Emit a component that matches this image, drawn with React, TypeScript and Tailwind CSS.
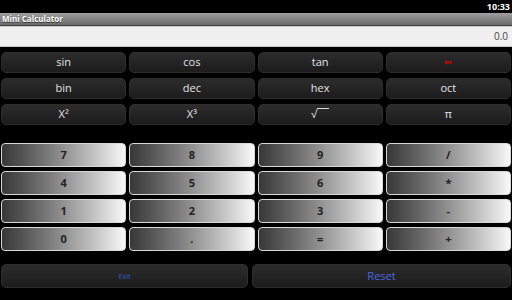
const sciRows: string[][] = [
	["sin", "cos", "tan", "back"],
	["bin", "dec", "hex", "oct"],
	["X²", "X³", "sqrt", "π"],
];

const numRows: string[][] = [
	["7", "8", "9", "/"],
	["4", "5", "6", "*"],
	["1", "2", "3", "-"],
	["0", ".", "=", "+"],
];

function SciLabel({ label }: { label: string }) {
	if (label === "back") {
		return (
			<svg width="8" height="5" viewBox="0 0 8 5">
				<path d="M0 2.5 L3 0 L3 1.2 L8 1.2 L8 3.8 L3 3.8 L3 5 Z" fill="#a81010" />
			</svg>
		);
	}
	if (label === "sqrt") {
		return (
			<span className="flex items-start">
				<span>√</span>
				<span className="mt-[2px] w-[12px] border-t border-[#e0e0e0]" />
			</span>
		);
	}
	return <span>{label}</span>;
}

export default function App() {
	return (
		<div
			className="w-[512px] h-[300px] bg-black flex flex-col overflow-hidden"
			style={{ fontFamily: '"Open Sans", "DejaVu Sans", sans-serif' }}
		>
			{/* status bar */}
			<div className="h-[13px] flex items-center justify-end pr-[2px] text-[9px] font-bold text-white leading-none">
				10:33
			</div>

			{/* title */}
			<div className="h-[13px] bg-gradient-to-b from-[#a0a0a0] to-[#6a6a6a] border-b border-[#444] flex items-center pl-[2px] text-[8px] font-bold text-white leading-none [text-shadow:0_1px_0_#333]">
				Mini Calculator
			</div>

			{/* display */}
			<div className="h-[21px] bg-[#f0f0f0] border-y border-[#c8c8c8] flex items-center justify-end pr-[4px] text-[10px] text-[#444]">
				0.0
			</div>

			{/* scientific keys */}
			<div className="mt-[5px] px-[1px] flex flex-col gap-[5px]">
				{sciRows.map((row, i) => (
					<div key={i} className="grid grid-cols-4 gap-[3px]">
						{row.map((k) => (
							<button
								key={k}
								className="h-[21px] rounded-[5px] bg-gradient-to-b from-[#2c2c2c] to-[#1c1c1c] border border-[#2e2e2e] text-[#e4e4e4] text-[11px] flex items-center justify-center"
							>
								<SciLabel label={k} />
							</button>
						))}
					</div>
				))}
			</div>

			{/* number keys */}
			<div className="mt-[18px] px-[1px] flex flex-col gap-[4px]">
				{numRows.map((row, i) => (
					<div key={i} className="grid grid-cols-4 gap-[3px]">
						{row.map((k) => (
							<button
								key={k}
								className="h-[24px] rounded-[4px] bg-gradient-to-r from-[#383838] to-[#f8f8f8] border border-[#d8d8d8] text-[#222] text-[11px] font-bold flex items-center justify-center"
							>
								{k}
							</button>
						))}
					</div>
				))}
			</div>

			{/* bottom */}
			<div className="mt-[13px] px-[1px] flex gap-[4px]">
				<button className="w-[247px] h-[24px] rounded-[5px] bg-gradient-to-b from-[#2c2c2c] to-[#1c1c1c] border border-[#2e2e2e] text-[#3a5ad0] text-[7px] flex items-center justify-center pt-[2px]">
					Exit
				</button>
				<button className="flex-1 h-[24px] rounded-[5px] bg-gradient-to-b from-[#2c2c2c] to-[#1c1c1c] border border-[#2e2e2e] text-[#4a6ae0] text-[11px] flex items-center justify-center">
					Reset
				</button>
			</div>
		</div>
	);
}
